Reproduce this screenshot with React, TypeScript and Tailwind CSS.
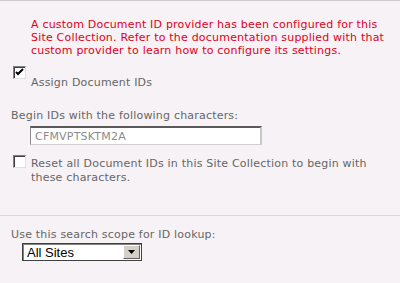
function Check({ checked }: { checked?: boolean }) {
  return (
    <span className="flex h-[13px] w-[13px] shrink-0 items-center justify-center border border-t-[#808080] border-l-[#808080] border-b-[#e0e0e0] border-r-[#e0e0e0] bg-white shadow-[inset_1px_1px_0_#404040]">
      {checked && (
        <svg width="9" height="9" viewBox="0 0 9 9">
          <path d="M1 4 L3 6 L8 1" stroke="#000" strokeWidth="2" fill="none" />
        </svg>
      )}
    </span>
  )
}

export default function App() {
  return (
    <div className="h-[283px] w-[400px] overflow-hidden border-t border-[#cfcbcf] bg-[#f7f2f5] font-['DejaVu_Sans',sans-serif] text-[11px] leading-[13px] tracking-[0.2px] text-[#666]">
      <p className="pl-[31px] pt-[17px] text-[#e0001b]">
        A custom Document ID provider has been configured for this
        <br />
        Site Collection. Refer to the documentation supplied with that
        <br />
        custom provider to learn how to configure its settings.
      </p>

      <div className="mt-[9px] flex pl-[13px]">
        <Check checked />
        <span className="ml-[5px] mt-[10px]">Assign Document IDs</span>
      </div>

      <div className="mt-[20px] pl-[11px]">Begin IDs with the following characters:</div>
      <div className="mt-[4px] pl-[30px]">
        <div className="flex h-[19px] w-[232px] items-center border-t-2 border-l border-b border-r-2 border-t-[#5a5a5a] border-l-[#8a8a8a] border-b-[#d0d0d0] border-r-[#c8c8c8] bg-white pl-[4px] text-[#8c8c8c]">
          CFMVPTSKTM2A
        </div>
      </div>

      <div className="mt-[10px] flex pl-[13px]">
        <Check />
        <span className="ml-[5px] mt-[2px] leading-[14px]">
          Reset all Document IDs in this Site Collection to begin with
          <br />
          these characters.
        </span>
      </div>

      <div className="mt-[30px] border-t border-[#dcd7dc]" />

      <div className="mt-[12px] pl-[11px]">Use this search scope for ID lookup:</div>
      <div className="mt-[2px] pl-[22px]">
        <div className="flex h-[18px] w-[120px] items-stretch border border-[#404040] bg-white shadow-[inset_1px_1px_0_#808080]">
          <span className="flex flex-1 items-center pl-[4px] font-['Liberation_Sans',sans-serif] text-[13px] tracking-normal text-black">
            All Sites
          </span>
          <span className="m-[1px] flex w-[17px] items-center justify-center border border-t-white border-l-white border-b-[#606060] border-r-[#606060] bg-[#d4d0c8]">
            <svg width="7" height="4" viewBox="0 0 7 4">
              <path d="M0 0 H7 L3.5 4 Z" fill="#000" />
            </svg>
          </span>
        </div>
      </div>
    </div>
  )
}
